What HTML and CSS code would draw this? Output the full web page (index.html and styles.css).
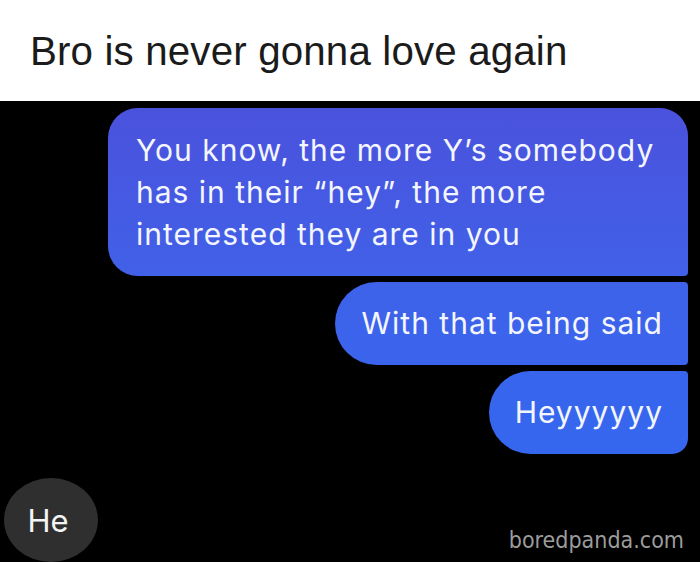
FILE: index.html
```html
<!DOCTYPE html>
<html>
<head>
<meta charset="utf-8">
<link rel="stylesheet" href="styles.css">
</head>
<body>
<div class="page">
  <header class="caption">
    <h1 class="caption-text">Bro is never gonna love again</h1>
  </header>
  <main class="chat">
    <div class="thread">
      <div class="bubble bubble-first">You know, the more Y’s somebody<br>has in their “hey”, the more<br>interested they are in you</div>
      <div class="bubble bubble-mid">With that being said</div>
      <div class="bubble bubble-last">Heyyyyyy</div>
    </div>
    <div class="footer">
      <div class="reply">He</div>
      <div class="watermark">boredpanda.com</div>
    </div>
  </main>
</div>
</body>
</html>
```
FILE: styles.css
```css
html, body {
  margin: 0;
  padding: 0;
  background: #000;
}
.page {
  width: 700px;
  height: 562px;
  overflow: hidden;
  display: flex;
  flex-direction: column;
}
.caption {
  background: #fff;
  height: 101px;
  display: flex;
  align-items: flex-start;
  padding-left: 30px;
  box-sizing: border-box;
}
.caption-text {
  margin: 27px 0 0 0;
  font-family: "Liberation Sans", Arial, sans-serif;
  font-weight: normal;
  font-size: 40.3px;
  line-height: 50px;
  color: #1b1b1b;
  letter-spacing: 0.15px;
}
.chat {
  flex: 1;
  display: flex;
  flex-direction: column;
  background: #000;
}
.thread {
  display: flex;
  flex-direction: column;
  align-items: flex-end;
  padding: 7px 12px 0 0;
  gap: 6px;
}
.bubble {
  font-family: Inter, "Noto Sans", sans-serif;
  font-size: 30px;
  letter-spacing: 1px;
  line-height: 42px;
  color: #f3f5ff;
  box-sizing: border-box;
  white-space: nowrap;
}
.bubble-first {
  width: 580px;
  padding: 21px 20px 21px 28px;
  border-radius: 30px 28px 4px 30px;
  background: linear-gradient(180deg, #4a52dc 0%, #4659e2 50%, #4161e8 100%);
}
.bubble-mid {
  height: 83px;
  padding: 20px 25px 21px 27px;
  border-radius: 42px 4px 4px 42px;
  background: linear-gradient(180deg, #3e62ea 0%, #3b64ec 100%);
}
.bubble-last {
  height: 83px;
  padding: 20px 25px 21px 26px;
  border-radius: 42px 4px 16px 42px;
  background: linear-gradient(180deg, #3865ed 0%, #3567ee 100%);
}
.footer {
  display: flex;
  justify-content: space-between;
  align-items: flex-end;
  padding: 24px 17px 0 4px;
}
.reply {
  width: 94px;
  height: 84px;
  border-radius: 47px / 42px;
  background: #2f2f2f;
  color: #f4f4f4;
  font-family: Inter, "Noto Sans", sans-serif;
  font-size: 31px;
  display: flex;
  align-items: center;
  justify-content: center;
  padding-right: 6px;
  box-sizing: border-box;
}
.watermark {
  font-family: "DejaVu Sans Condensed", "DejaVu Sans", sans-serif;
  font-size: 23px;
  line-height: 28px;
  color: #9c9c9c;
  margin-bottom: 8px;
  margin-right: -1px;
}
```
